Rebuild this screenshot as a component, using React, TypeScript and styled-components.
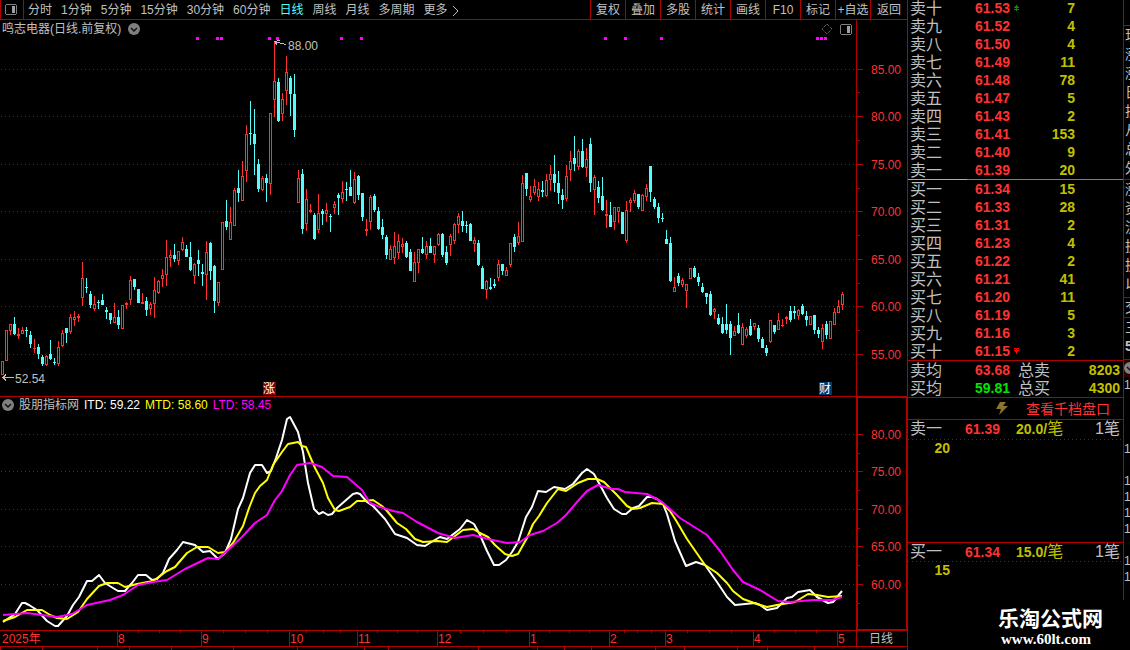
import React from "react";
import styled, { createGlobalStyle } from "styled-components";

const LINE = "#b00000";
const RED = "#ff3232";
const CYAN = "#54fcfc";
const GRAY = "#c0c0c0";
const YELLOW = "#c0c000";
const MAGENTA = "#ff00ff";
const FONT = `"Liberation Sans", "Noto Sans CJK SC", sans-serif`;

const GlobalStyle = createGlobalStyle`
  * { box-sizing: border-box; }
  body { margin: 0; background: #000; color: ${GRAY}; font: 12px/18px ${FONT}; overflow: hidden; }
  button { font: inherit; color: inherit; background: none; border: 0; padding: 0; cursor: pointer; white-space: nowrap; }
  svg { display: block; }
`;

/* ---------- data ---------- */

// One bar per trading day: [direction, high, body top, body bottom, low]
type Bar = [0 | 1, number, number, number, number];
const UP = 1;
const DN = 0;
const bars: Bar[] = [
  [UP, 361, 361, 375, 375], [UP, 330, 330, 361, 361], [UP, 324, 324, 331, 335], [DN, 317, 324, 334, 335],
  [UP, 328, 334, 336, 339], [UP, 327, 330, 334, 334], [DN, 327, 330, 331, 337], [DN, 331, 335, 344, 348],
  [UP, 339, 348, 349, 353], [DN, 344, 347, 354, 359], [DN, 355, 357, 364, 366], [UP, 355, 356, 365, 366],
  [DN, 340, 354, 359, 360], [DN, 358, 362, 363, 365], [UP, 341, 347, 364, 366], [UP, 330, 333, 346, 347],
  [DN, 328, 328, 333, 343], [UP, 314, 317, 332, 334], [UP, 311, 317, 320, 326], [UP, 314, 316, 318, 322],
  [UP, 262, 278, 298, 306], [DN, 278, 287, 288, 293], [DN, 291, 294, 305, 308], [UP, 296, 304, 309, 311],
  [DN, 300, 302, 303, 309], [DN, 294, 300, 305, 305], [DN, 307, 310, 312, 319], [DN, 313, 313, 320, 324],
  [UP, 303, 317, 323, 323], [DN, 310, 317, 325, 329], [UP, 305, 305, 329, 329], [UP, 302, 303, 305, 309],
  [UP, 276, 280, 300, 305], [DN, 279, 279, 287, 290], [DN, 289, 289, 303, 303], [UP, 293, 302, 304, 304],
  [DN, 297, 301, 310, 316], [UP, 302, 304, 309, 315], [UP, 277, 290, 304, 318], [UP, 280, 281, 293, 294],
  [UP, 269, 275, 279, 287], [UP, 240, 257, 275, 286], [UP, 250, 255, 258, 267], [DN, 244, 255, 259, 262],
  [UP, 251, 251, 261, 265], [UP, 237, 242, 250, 251], [DN, 245, 249, 257, 257], [DN, 242, 257, 270, 271],
  [UP, 263, 264, 276, 284], [DN, 250, 260, 264, 276], [DN, 264, 272, 274, 286], [UP, 241, 252, 275, 300],
  [DN, 242, 243, 271, 280], [DN, 265, 266, 301, 313], [UP, 282, 282, 303, 306], [UP, 222, 222, 270, 270],
  [DN, 200, 221, 227, 230], [UP, 207, 222, 240, 240], [UP, 188, 190, 226, 226], [DN, 170, 188, 193, 202],
  [UP, 161, 176, 201, 201], [UP, 125, 134, 171, 182], [DN, 101, 133, 134, 145], [DN, 109, 134, 144, 175],
  [DN, 159, 164, 189, 192], [UP, 176, 178, 190, 191], [DN, 174, 178, 183, 202], [UP, 113, 113, 184, 195],
  [UP, 42, 81, 100, 117], [DN, 78, 82, 121, 122], [UP, 93, 99, 114, 121], [UP, 56, 72, 91, 105],
  [DN, 76, 78, 94, 116], [DN, 74, 94, 130, 137], [UP, 170, 178, 203, 203], [DN, 169, 174, 229, 234],
  [UP, 189, 199, 224, 231], [UP, 204, 210, 212, 213], [DN, 213, 215, 239, 240], [UP, 194, 213, 230, 233],
  [DN, 209, 211, 214, 225], [UP, 203, 210, 214, 222], [DN, 214, 216, 217, 232], [UP, 201, 204, 208, 214],
  [DN, 193, 195, 198, 215], [UP, 181, 192, 199, 203], [DN, 182, 189, 190, 201], [DN, 170, 187, 196, 196],
  [UP, 172, 179, 203, 204], [DN, 175, 176, 195, 200], [DN, 193, 193, 217, 221], [UP, 219, 229, 231, 236],
  [UP, 195, 197, 222, 230], [DN, 194, 196, 210, 212], [DN, 207, 211, 229, 230], [DN, 219, 227, 235, 239],
  [DN, 235, 237, 255, 259], [UP, 245, 249, 260, 260], [UP, 232, 246, 258, 264], [UP, 234, 241, 253, 259],
  [UP, 238, 244, 247, 253], [DN, 241, 243, 257, 258], [DN, 249, 252, 271, 271], [UP, 252, 262, 282, 282],
  [UP, 249, 249, 263, 273], [DN, 237, 249, 253, 254], [UP, 241, 246, 255, 259], [DN, 238, 246, 253, 253],
  [UP, 246, 246, 255, 263], [UP, 233, 234, 245, 246], [DN, 233, 234, 255, 257], [DN, 246, 252, 263, 265],
  [UP, 234, 236, 245, 256], [UP, 223, 224, 241, 244], [UP, 213, 216, 225, 233], [DN, 211, 221, 226, 232],
  [DN, 221, 225, 226, 233], [DN, 223, 224, 241, 241], [UP, 237, 240, 244, 252], [DN, 240, 243, 265, 266],
  [DN, 266, 268, 289, 289], [UP, 280, 281, 290, 299], [DN, 278, 287, 289, 290], [DN, 279, 284, 286, 288],
  [UP, 260, 264, 278, 281], [DN, 264, 264, 271, 275], [UP, 267, 270, 276, 276], [UP, 243, 243, 265, 267],
  [DN, 234, 237, 247, 252], [UP, 222, 236, 243, 245], [UP, 175, 183, 242, 242], [DN, 173, 173, 189, 196],
  [UP, 186, 196, 200, 202], [UP, 179, 186, 193, 195], [UP, 182, 189, 197, 201], [DN, 181, 190, 192, 197],
  [UP, 174, 180, 196, 197], [UP, 165, 174, 180, 191], [DN, 155, 174, 183, 192], [DN, 171, 183, 193, 204],
  [DN, 189, 195, 200, 209], [UP, 165, 176, 199, 201], [UP, 151, 161, 170, 181], [DN, 136, 158, 164, 171],
  [UP, 149, 151, 167, 170], [DN, 139, 151, 167, 168], [UP, 148, 159, 168, 177], [DN, 138, 144, 183, 192],
  [UP, 175, 177, 190, 215], [DN, 181, 187, 198, 203], [DN, 177, 196, 210, 211], [UP, 200, 214, 216, 228],
  [DN, 202, 215, 227, 227], [UP, 207, 207, 222, 230], [UP, 207, 207, 212, 223], [DN, 212, 212, 234, 234],
  [UP, 201, 210, 241, 243], [UP, 198, 200, 203, 212], [UP, 190, 193, 201, 203], [DN, 194, 194, 207, 209],
  [UP, 194, 195, 211, 211], [UP, 184, 188, 197, 201], [DN, 166, 166, 192, 202], [DN, 197, 199, 207, 209],
  [DN, 203, 207, 218, 223], [DN, 213, 218, 219, 222], [DN, 230, 239, 244, 244], [DN, 237, 243, 281, 282],
  [UP, 277, 287, 292, 292], [DN, 273, 276, 283, 286], [UP, 278, 280, 285, 287], [UP, 284, 284, 291, 308],
  [UP, 268, 268, 279, 279], [DN, 266, 268, 277, 278], [DN, 273, 277, 282, 286], [DN, 283, 287, 292, 293],
  [DN, 293, 293, 297, 304], [DN, 291, 294, 315, 316], [UP, 308, 309, 312, 319], [DN, 314, 318, 324, 325],
  [DN, 317, 324, 333, 334], [DN, 304, 324, 330, 334], [DN, 321, 324, 338, 355], [UP, 326, 331, 336, 336],
  [DN, 313, 325, 333, 334], [UP, 323, 327, 345, 345], [UP, 327, 329, 336, 338], [DN, 319, 326, 335, 336],
  [UP, 323, 323, 327, 330], [DN, 325, 328, 339, 342], [DN, 337, 339, 348, 348], [DN, 345, 348, 353, 356],
  [UP, 320, 320, 342, 343], [DN, 325, 325, 332, 334], [UP, 313, 320, 330, 330], [UP, 319, 325, 326, 327],
  [UP, 316, 317, 319, 324], [DN, 306, 311, 320, 322], [DN, 306, 311, 313, 319], [UP, 309, 310, 316, 320],
  [DN, 304, 306, 314, 315], [DN, 311, 316, 320, 326], [UP, 316, 316, 325, 325], [DN, 315, 315, 330, 334],
  [DN, 327, 330, 334, 338], [UP, 324, 328, 342, 349], [DN, 321, 324, 335, 339], [UP, 321, 321, 339, 339],
  [UP, 308, 312, 325, 325], [UP, 300, 306, 313, 313], [UP, 292, 294, 305, 310],
];

const signalMarks = [196, 216, 220, 268, 276, 340, 360, 604, 624, 660, 816, 820, 824];

const itd =
  "3,622 15,614 22,603 25,603 29,605 37,610 47,621 55,626 58,626 67,616 73,605 79,597 87,581 92,581 99,575 105,583 113,588 118,591 125,591 132,583 138,575 146,575 152,580 157,579 163,573 169,559 177,550 183,542 195,545 203,552 210,551 218,559 225,553 231,539 238,509 243,498 250,473 255,465 262,465 267,473 271,471 276,458 282,440 287,419 290,417 298,432 303,452 308,483 314,509 319,514 323,512 328,515 332,514 337,508 353,494 357,493 360,494 367,502 373,506 385,519 395,534 407,538 417,545 425,546 433,541 440,537 447,539 460,529 467,520 474,524 480,535 487,551 494,565 499,565 506,560 512,552 518,542 526,517 532,507 538,491 546,492 554,487 565,489 573,484 582,473 587,469 594,474 600,485 607,498 614,509 622,514 626,514 633,508 639,506 647,497 652,497 657,499 663,504 667,514 675,541 686,566 696,562 705,565 717,582 727,597 735,605 755,603 760,605 767,610 777,608 787,598 792,597 798,592 810,590 817,597 828,603 833,602 842,591";
const mtd =
  "3,621 15,617 27,610 42,610 50,615 57,618 67,619 78,612 87,599 99,586 107,583 118,583 125,587 137,584 153,581 167,571 175,567 187,553 197,547 208,547 218,553 225,552 233,543 243,526 249,508 255,493 260,486 267,480 273,465 282,452 288,444 298,442 302,446 306,447 315,468 323,483 328,498 335,510 339,511 350,507 357,501 365,501 373,500 382,506 387,511 397,523 406,529 415,539 423,542 437,541 447,542 463,530 473,529 480,533 488,537 495,545 505,554 512,556 518,554 527,538 533,524 539,516 547,503 558,489 566,491 578,483 588,479 597,479 604,482 617,495 627,506 633,509 640,508 652,503 663,504 670,511 677,522 687,539 705,565 717,573 727,583 733,591 743,599 757,604 767,607 777,605 795,602 808,594 817,595 828,597 842,596";
const ltd =
  "3,615 27,613 42,615 57,617 72,614 87,605 110,600 123,595 138,585 153,582 167,580 185,569 208,558 218,559 228,550 242,537 255,523 267,515 275,500 282,491 290,475 297,465 310,463 322,467 333,476 347,477 362,490 370,503 380,507 393,511 403,513 417,522 438,533 455,538 473,535 488,539 507,543 520,542 530,535 543,531 557,523 566,515 577,502 587,491 598,485 612,489 618,489 625,492 647,494 662,502 680,518 707,535 720,551 733,570 743,582 760,590 778,601 790,602 813,600 832,600 842,597";

const priceLevels: [number, string][] = [
  [69, "85.00"], [116, "80.00"], [164, "75.00"], [211, "70.00"], [259, "65.00"], [306, "60.00"], [354, "55.00"],
];
const priceMinor = [92, 140, 188, 235, 283, 330];
const indLevels: [number, string][] = [
  [434, "80.00"], [471, "75.00"], [509, "70.00"], [546, "65.00"], [584, "60.00"],
];
const indMinor = [453, 490, 528, 565, 603];

const months: [number, string][] = [
  [117, "8"], [201, "9"], [289, "10"], [357, "11"], [437, "12"], [529, "1"], [609, "2"], [665, "3"], [753, "4"], [837, "5"],
];
const weekTicks = [
  138, 159, 180, 223, 245, 267, 306, 323, 340, 377, 397, 417, 460, 483, 506, 549, 569, 589, 624, 637, 651, 687, 709, 731,
  774, 795, 816,
];

const periods = ["分时", "1分钟", "5分钟", "15分钟", "30分钟", "60分钟", "日线", "周线", "月线", "多周期"];
const tools = ["复权", "叠加", "多股", "统计", "画线", "F10", "标记", "+自选", "返回"];

const asks: [string, string, string][] = [
  ["卖十", "61.53", "7"], ["卖九", "61.52", "4"], ["卖八", "61.50", "4"], ["卖七", "61.49", "11"], ["卖六", "61.48", "78"],
  ["卖五", "61.47", "5"], ["卖四", "61.43", "2"], ["卖三", "61.41", "153"], ["卖二", "61.40", "9"], ["卖一", "61.39", "20"],
];
const bids: [string, string, string][] = [
  ["买一", "61.34", "15"], ["买二", "61.33", "28"], ["买三", "61.31", "2"], ["买四", "61.23", "4"], ["买五", "61.22", "2"],
  ["买六", "61.21", "41"], ["买七", "61.20", "11"], ["买八", "61.19", "5"], ["买九", "61.16", "3"], ["买十", "61.15", "2"],
];

// Trade list rows of the neighbouring column, one entry per 16px row
const tradeRows = ["1", "", "", "", "1", "", "1", "1", "1", "1", "", "1", "1"];

/* ---------- frame ---------- */

const Page = styled.div`
  display: grid;
  grid-template-columns: minmax(0, 1fr) 223px;
  background: #000;
`;
const ChartSide = styled.main`
  min-width: 0;
`;
const QuoteSide = styled.aside`
  border-left: 1px solid ${LINE};
`;

/* ---------- toolbar ---------- */

const Toolbar = styled.header`
  display: flex;
  height: 20px;
  border-bottom: 1px solid ${LINE};
  line-height: 18px;
  overflow: hidden;
`;
const PanelButton = styled.button`
  width: 24px;
  padding-left: 4px;
  border-left: 1px solid ${LINE};
  border-right: 1px solid ${LINE};
`;
const Periods = styled.nav`
  display: flex;
  flex: 1;
  gap: 9px;
  padding-left: 4px;
`;
const Period = styled.button<{ $active?: boolean }>`
  display: flex;
  align-items: center;
  gap: 4px;
  padding-top: 1px;
  color: ${(p) => (p.$active ? CYAN : GRAY)};
`;
const Tool = styled.button`
  width: 35px;
  padding-top: 1px;
  border-left: 1px solid ${LINE};
  &:last-child { width: 37px; }
`;

/* ---------- charts ---------- */

const ChartRow = styled.section<{ $height: number; $divided?: boolean }>`
  display: grid;
  grid-template-columns: minmax(0, 1fr) 51px;
  height: ${(p) => p.$height}px;
  border-bottom: ${(p) => (p.$divided ? `1px solid ${LINE}` : "0")};
`;
const Plot = styled.div`
  position: relative;
  min-width: 0;
  overflow: hidden;
`;
const PriceAxis = styled.div`
  border-left: 1px solid ${LINE};
`;
const IndicatorAxis = styled.div`
  border: solid ${LINE};
  border-width: 1px 1px 1px 2px;
`;
const PlotTitle = styled.div<{ $height: number; $gap: number }>`
  position: absolute;
  top: 0;
  left: 0;
  right: 0;
  display: flex;
  align-items: center;
  gap: ${(p) => p.$gap}px;
  height: ${(p) => p.$height}px;
  padding: 0 4px 0 2px;
  white-space: nowrap;
`;
const Series = styled.span<{ $color: string }>`
  color: ${(p) => p.$color};
`;
const Spacer = styled.span`
  flex: 1;
`;
const PeriodCell = styled.div`
  border-left: 1px solid ${LINE};
  padding-left: 12px;
  line-height: 16px;
`;
const TabStrip = styled.div`
  display: flex;
  height: 3px;
  overflow: hidden;
`;
const Tab = styled.div<{ $width: number }>`
  width: ${(p) => p.$width}px;
  border-left: 1px solid ${LINE};
`;
const tabWidths = [42, 55, 32, 42, 62, 64, 67, 24, 90, 59, 27, 27, 64, 29, 53, 30, 47, 65];

/* ---------- order book ---------- */

const QuoteTop = styled.div`
  display: grid;
  grid-template-columns: minmax(0, 1fr) 6px;
  height: 600px;
`;
const Book = styled.div`
  border-right: 1px solid ${LINE};
`;
const AskBox = styled.div`
  display: flex;
  align-items: flex-end;
  height: 179px;
  overflow: hidden;
`;
const Balance = styled.div`
  display: grid;
  grid-template-columns: 59px 1fr;
  height: 1px;
`;
const BalanceBar = styled.span<{ $color: string }>`
  background: ${(p) => p.$color};
`;
const Table = styled.table`
  width: 100%;
  table-layout: fixed;
  border-collapse: collapse;
`;
const Side = styled.th<{ $w?: number }>`
  width: ${(p) => p.$w ?? 67}px;
  height: 18px;
  padding: 2px 0 0 2px;
  text-align: left;
  font-weight: 400;
  font-size: 16px;
  line-height: 16px;
  color: ${GRAY};
  white-space: nowrap;
`;
const Num = styled.td<{ $w?: number; $color: string; $right?: boolean; $edge?: boolean }>`
  width: ${(p) => (p.$w ? `${p.$w}px` : "auto")};
  height: 18px;
  padding: 0 ${(p) => (p.$edge ? 3 : 0)}px 0 0;
  text-align: ${(p) => (p.$right ? "right" : "left")};
  font-weight: 700;
  font-size: 14px;
  line-height: 18px;
  color: ${(p) => p.$color};
  white-space: nowrap;
`;
const Fill = styled.td`
  padding: 0;
`;
const Price = styled.span`
  display: flex;
  align-items: center;
  gap: 4px;
`;
const Averages = styled.div`
  border-top: 1px solid ${LINE};
  border-bottom: 1px solid ${LINE};
`;
const DepthLink = styled.a`
  display: flex;
  align-items: center;
  justify-content: flex-end;
  gap: 18px;
  height: 22px;
  padding-right: 13px;
  border-bottom: 1px solid ${LINE};
  color: ${RED};
  font-size: 14px;
  text-decoration: none;
`;
const Level = styled.section<{ $height: number; $divided?: boolean }>`
  height: ${(p) => p.$height}px;
  border-bottom: ${(p) => (p.$divided ? `1px solid ${LINE}` : "0")};
`;
const LevelHead = styled.div<{ $height: number }>`
  display: grid;
  grid-template-columns: 55px 51px 1fr auto;
  height: ${(p) => p.$height}px;
  padding: 0 3px 0 2px;
  line-height: 18px;
  font-size: 16px;
  background: repeating-linear-gradient(90deg, ${LINE} 0 1px, transparent 1px 4px) left bottom / 100% 1px no-repeat;
`;
const Strong = styled.b<{ $color: string }>`
  font-size: 14px;
  color: ${(p) => p.$color};
`;
const PerOrder = styled.span`
  color: ${YELLOW};
  white-space: nowrap;
`;
const Queue = styled.div`
  width: 42px;
  line-height: 17px;
  text-align: right;
`;

/* ---------- clipped neighbour column ---------- */

const Edge = styled.div`
  overflow: hidden;
  font-size: 14px;
`;
const EdgeGroup = styled.div<{ $height: number }>`
  height: ${(p) => p.$height}px;
  border-bottom: 1px solid ${LINE};
  overflow: hidden;
`;
const EdgeText = styled.div`
  height: 19px;
  line-height: 19px;
  padding-left: 1px;
  white-space: nowrap;
`;
const EdgeTab = styled.div`
  height: 17px;
  padding-top: 2px;
  background: #300000;
  overflow: hidden;
`;
const EdgeTrade = styled.div`
  height: 16px;
  font-size: 12px;
  line-height: 17px;
`;

/* ---------- footer mark ---------- */

const Mark = styled.footer`
  height: 50px;
  padding: 6px 0 0 90px;
  color: #fff;
  white-space: nowrap;
`;
const MarkName = styled.div`
  font: 700 21px/25px ${FONT};
`;
const MarkUrl = styled.div`
  padding-left: 3px;
  font: 700 15px/17px "Liberation Serif", serif;
`;

/* ---------- icons ---------- */

const PanelIcon = () => (
  <svg width="12" height="11" shapeRendering="crispEdges">
    <path d="M1 0h10v1h1v9h-1v1h-10v-1h-1v-9h1z" fill="#808080" />
    <rect x="1" y="1" width="10" height="9" fill="#000" />
    <rect x="7" y="2" width="3" height="7" fill="#a0a0a0" />
  </svg>
);
const DropIcon = () => (
  <svg width="12" height="12">
    <circle cx="6" cy="6" r="6" fill="#808080" />
    <path d="M3 5l3 3 3-3" fill="none" stroke="#111" strokeWidth="1.5" />
  </svg>
);
const DiamondIcon = () => (
  <svg width="12" height="12">
    <path d="M6 1l5 5-5 5-5-5z" fill="none" stroke="#909090" strokeDasharray="1 1" />
  </svg>
);
const MoreIcon = () => (
  <svg width="7" height="11">
    <path d="M1 1l5 5-5 5" fill="none" stroke={GRAY} />
  </svg>
);
const BoltIcon = () => (
  <svg width="12" height="13">
    <path d="M4 0h6l-3 4h5l-9 9 2-6h-5z" fill="#8a7430" />
  </svg>
);
const TopIcon = ({ down }: { down?: boolean }) => (
  <svg width="5" height="6" shapeRendering="crispEdges">
    {down ? (
      <path d="M0 0h5v1h-2v1h2v1h-1v1h-1v2h-1v-2h-1v-1h-1v-1h2v-1h-2z" fill="#ff0000" />
    ) : (
      <path d="M2 0h1v1h1v1h1v1h-2v1h2v1h-2v1h-1v-1h-2v-1h2v-1h-2v-1h1v-1h1z" fill="#009000" />
    )}
  </svg>
);

/* ---------- pieces ---------- */

const GridLines = ({ levels }: { levels: [number, string][] }) => (
  <>
    {levels.map(([y]) => (
      <line key={y} x1="1" x2="100%" y1={y + 0.5} y2={y + 0.5} stroke={LINE} strokeDasharray="1 3" />
    ))}
  </>
);

const AxisScale = ({ levels, minor, offset, height, inset }: {
  levels: [number, string][]; minor: number[]; offset: number; height: number; inset: number;
}) => (
  <svg width="48" height={height} fontFamily={FONT} fontSize="12">
    <g transform={`translate(0 ${-offset})`}>
      {levels.map(([y, label]) => (
        <g key={y}>
          <rect x="0" y={y} width={6 - inset} height="1" fill={LINE} />
          <text x={14 - inset} y={y + 5} fill={RED}>{label}</text>
        </g>
      ))}
      {minor.map((y) => (
        <rect key={y} x="0" y={y} width={3 - inset} height="1" fill={LINE} />
      ))}
    </g>
  </svg>
);

const Candle = ({ bar, x }: { bar: Bar; x: number }) => {
  const [dir, high, top, bottom, low] = bar;
  const h = Math.max(1, bottom - top);
  if (dir === DN) {
    return (
      <g fill={CYAN}>
        <rect x={x} y={high} width="1" height={low - high} />
        <rect x={x - 1} y={top} width="3" height={h} />
      </g>
    );
  }
  return (
    <g fill={RED}>
      <rect x={x} y={high} width="1" height={Math.max(0, top - high)} />
      <rect x={x} y={bottom} width="1" height={Math.max(0, low - bottom)} />
      <rect x={x - 1} y={top} width="3" height={h} />
      {h > 2 && <rect x={x} y={top + 1} width="1" height={h - 2} fill="#000" />}
    </g>
  );
};

const CandleChart = () => (
  <svg width="100%" height="376" shapeRendering="crispEdges" fontFamily={FONT} fontSize="12">
    <g transform="translate(0 -20)">
      <GridLines levels={priceLevels} />
      {signalMarks.map((x) => (
        <rect key={x} x={x} y="37" width="3" height="3" fill={MAGENTA} />
      ))}
      {bars.map((bar, i) => (
        <Candle key={i} bar={bar} x={2 + i * 4} />
      ))}
      <g fill="none" stroke={GRAY}>
        <path d="M274.5 41.5L286 44.5M280 40.5L274.5 41.5L277 45" />
        <path d="M3 377.5H14M6 374.5L3 377.5L6 380.5" />
      </g>
      <g fill={GRAY}>
        <text x="288" y="50">88.00</text>
        <text x="15" y="383">52.54</text>
      </g>
      <rect x="263" y="382" width="13" height="13" fill="#800000" />
      <rect x="819" y="382" width="13" height="13" fill="#003870" />
      <g fill="#fff">
        <text x="263" y="393">涨</text>
        <text x="819" y="393">财</text>
      </g>
    </g>
  </svg>
);

const IndicatorChart = () => (
  <svg width="100%" height="233">
    <g transform="translate(0 -397)" fill="none" strokeLinejoin="round">
      <GridLines levels={indLevels} />
      <polyline points={itd} stroke="#fff" strokeWidth="2" />
      <polyline points={mtd} stroke="#ffff00" strokeWidth="2" />
      <polyline points={ltd} stroke={MAGENTA} strokeWidth="2" />
    </g>
  </svg>
);

const TimeScale = () => (
  <svg width="100%" height="15" fontFamily={FONT} fontSize="12" fill={RED}>
    <text x="2" y="12">2025年</text>
    {months.map(([x, label]) => (
      <g key={label}>
        <rect x={x} y="0" width="1" height="15" fill={LINE} />
        <text x={x + 1} y="12">{label}</text>
      </g>
    ))}
    {weekTicks.map((x) => (
      <rect key={x} x={x} y="0" width="1" height="2" fill={LINE} />
    ))}
  </svg>
);

const BookTable = ({ rows, marked, down }: { rows: [string, string, string][]; marked: string; down?: boolean }) => (
  <Table>
    <tbody>
      {rows.map(([side, price, volume]) => (
        <tr key={side}>
          <Side scope="row">{side}</Side>
          <Num $w={50} $color={RED}>
            <Price>
              {price}
              {side === marked && <TopIcon down={down} />}
            </Price>
          </Num>
          <Num $w={50} $color={YELLOW} $right>{volume}</Num>
          <Fill />
        </tr>
      ))}
    </tbody>
  </Table>
);

const QueueLevel = ({ side, price, average, queue, height, head, divided }: {
  side: string; price: string; average: string; queue: string; height: number; head: number; divided?: boolean;
}) => (
  <Level $height={height} $divided={divided}>
    <LevelHead $height={head}>
      <span>{side}</span>
      <Strong $color={RED}>{price}</Strong>
      <PerOrder><Strong $color={YELLOW}>{average}/</Strong>笔</PerOrder>
      <span>1笔</span>
    </LevelHead>
    <Queue><Strong $color={YELLOW}>{queue}</Strong></Queue>
  </Level>
);

export default function App() {
  return (
    <Page>
      <GlobalStyle />
      <ChartSide>
        <Toolbar>
          <PanelButton aria-label="panel"><PanelIcon /></PanelButton>
          <Periods>
            {periods.map((p) => (
              <Period key={p} $active={p === "日线"}>{p}</Period>
            ))}
            <Period>更多 <MoreIcon /></Period>
          </Periods>
          {tools.map((t) => (
            <Tool key={t}>{t}</Tool>
          ))}
        </Toolbar>

        <ChartRow $height={377} $divided>
          <Plot>
            <CandleChart />
            <PlotTitle $height={18} $gap={7}>
              <span>鸣志电器(日线.前复权)</span>
              <DropIcon />
              <Spacer />
              <DiamondIcon />
              <PanelIcon />
            </PlotTitle>
          </Plot>
          <PriceAxis>
            <AxisScale levels={priceLevels} minor={priceMinor} offset={20} height={376} inset={0} />
          </PriceAxis>
        </ChartRow>

        <ChartRow $height={234} $divided>
          <Plot>
            <IndicatorChart />
            <PlotTitle $height={16} $gap={5}>
              <DropIcon />
              <span>股朋指标网</span>
              <Series $color="#ffffff">ITD: 59.22</Series>
              <Series $color="#ffff00">MTD: 58.60</Series>
              <Series $color={MAGENTA}>LTD: 58.45</Series>
            </PlotTitle>
          </Plot>
          <IndicatorAxis>
            <AxisScale levels={indLevels} minor={indMinor} offset={398} height={231} inset={1} />
          </IndicatorAxis>
        </ChartRow>

        <ChartRow $height={16} $divided>
          <TimeScale />
          <PeriodCell>日线</PeriodCell>
        </ChartRow>
        <TabStrip>
          {tabWidths.map((w, i) => (
            <Tab key={i} $width={w} />
          ))}
        </TabStrip>
      </ChartSide>

      <QuoteSide>
        <QuoteTop>
          <Book>
            <AskBox>
              <BookTable rows={asks} marked="卖十" />
            </AskBox>
            <Balance>
              <BalanceBar $color="#e0a848" />
              <BalanceBar $color="#4888d8" />
            </Balance>
            <BookTable rows={bids} marked="买十" down />
            <Averages>
              <Table>
                <tbody>
                  <tr>
                    <Side scope="row">卖均</Side>
                    <Num $w={41} $color={RED}>63.68</Num>
                    <Side scope="row" $w={40}>总卖</Side>
                    <Num $color={YELLOW} $right $edge>8203</Num>
                  </tr>
                  <tr>
                    <Side scope="row">买均</Side>
                    <Num $w={41} $color="#00e600">59.81</Num>
                    <Side scope="row" $w={40}>总买</Side>
                    <Num $color={YELLOW} $right $edge>4300</Num>
                  </tr>
                </tbody>
              </Table>
            </Averages>
            <DepthLink href="#depth">
              <BoltIcon />
              查看千档盘口
            </DepthLink>
            <QueueLevel side="卖一" price="61.39" average="20.0" queue="20" height={123} head={20} divided />
            <QueueLevel side="买一" price="61.34" average="15.0" queue="15" height={57} head={19} />
          </Book>
          <Edge aria-hidden="true">
            <EdgeGroup $height={26} />
            <EdgeGroup $height={154}>
              {["现", "涨", "涨", "日", "振", "从", "总", "外"].map((t, i) => (
                <EdgeText key={i}>{t}</EdgeText>
              ))}
            </EdgeGroup>
            <EdgeGroup $height={118}>
              {["涨", "资", "流", "换", "换", "以"].map((t, i) => (
                <EdgeText key={i}>{t}</EdgeText>
              ))}
            </EdgeGroup>
            <EdgeGroup $height={20}><EdgeText>交</EdgeText></EdgeGroup>
            <EdgeGroup $height={42}>
              <EdgeText>三</EdgeText>
              <EdgeText><b>5</b></EdgeText>
            </EdgeGroup>
            <EdgeTab><DropIcon /></EdgeTab>
            {tradeRows.map((t, i) => (
              <EdgeTrade key={i}>{t}</EdgeTrade>
            ))}
          </Edge>
        </QuoteTop>
        <Mark>
          <MarkName>乐淘公式网</MarkName>
          <MarkUrl>www.60lt.com</MarkUrl>
        </Mark>
      </QuoteSide>
    </Page>
  );
}
